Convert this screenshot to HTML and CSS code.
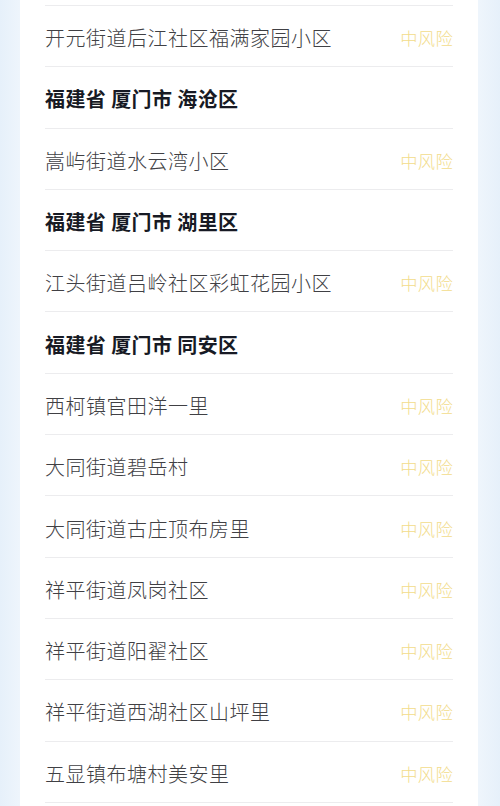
FILE: index.html
```html
<!DOCTYPE html>
<html lang="zh">
<head>
<meta charset="utf-8">
<link rel="stylesheet" href="styles.css">
</head>
<body>
<div class="page">
  <div class="card">
    <div class="top-gap"></div>
    <ul class="list">
      <li class="row"><span class="name">开元街道后江社区福满家园小区</span><span class="risk">中风险</span></li>
      <li class="row head"><span class="name">福建省 厦门市 海沧区</span></li>
      <li class="row"><span class="name">嵩屿街道水云湾小区</span><span class="risk">中风险</span></li>
      <li class="row head"><span class="name">福建省 厦门市 湖里区</span></li>
      <li class="row"><span class="name">江头街道吕岭社区彩虹花园小区</span><span class="risk">中风险</span></li>
      <li class="row head"><span class="name">福建省 厦门市 同安区</span></li>
      <li class="row"><span class="name">西柯镇官田洋一里</span><span class="risk">中风险</span></li>
      <li class="row"><span class="name">大同街道碧岳村</span><span class="risk">中风险</span></li>
      <li class="row"><span class="name">大同街道古庄顶布房里</span><span class="risk">中风险</span></li>
      <li class="row"><span class="name">祥平街道凤岗社区</span><span class="risk">中风险</span></li>
      <li class="row"><span class="name">祥平街道阳翟社区</span><span class="risk">中风险</span></li>
      <li class="row"><span class="name">祥平街道西湖社区山坪里</span><span class="risk">中风险</span></li>
      <li class="row"><span class="name">五显镇布塘村美安里</span><span class="risk">中风险</span></li>
      <li class="row"><span class="name">&nbsp;</span></li>
    </ul>
  </div>
</div>
</body>
</html>
```
FILE: styles.css
```css
html, body {
  margin: 0;
  padding: 0;
  height: 806px;
  overflow: hidden;
}
body {
  background: linear-gradient(90deg, #e6f0fa 0%, #eef5fc 4%, #eef5fc 96%, #e6f0fa 100%);
  font-family: "Noto Sans CJK SC", "Noto Sans", sans-serif;
}
.page {
  padding: 0 22px 0 20px;
}
.card {
  background: #ffffff;
  padding: 0 25px;
  height: 806px;
  overflow: hidden;
}
.top-gap {
  height: 5px;
}
.list {
  list-style: none;
  margin: 0;
  padding: 0;
}
.row {
  display: flex;
  align-items: center;
  justify-content: space-between;
  height: 61.3px;
  box-sizing: border-box;
  border-top: 1.3px solid #ececee;
  padding-top: 3px;
}
.name {
  font-size: 20px;
  font-weight: 300;
  color: #404044;
  letter-spacing: 0.5px;
}
.head .name {
  font-weight: 700;
  color: #171a24;
  font-size: 20px;
  letter-spacing: 0.4px;
}
.risk {
  font-size: 17.3px;
  font-weight: 300;
  color: #f2dc8c;
  letter-spacing: 0.3px;
}
```
